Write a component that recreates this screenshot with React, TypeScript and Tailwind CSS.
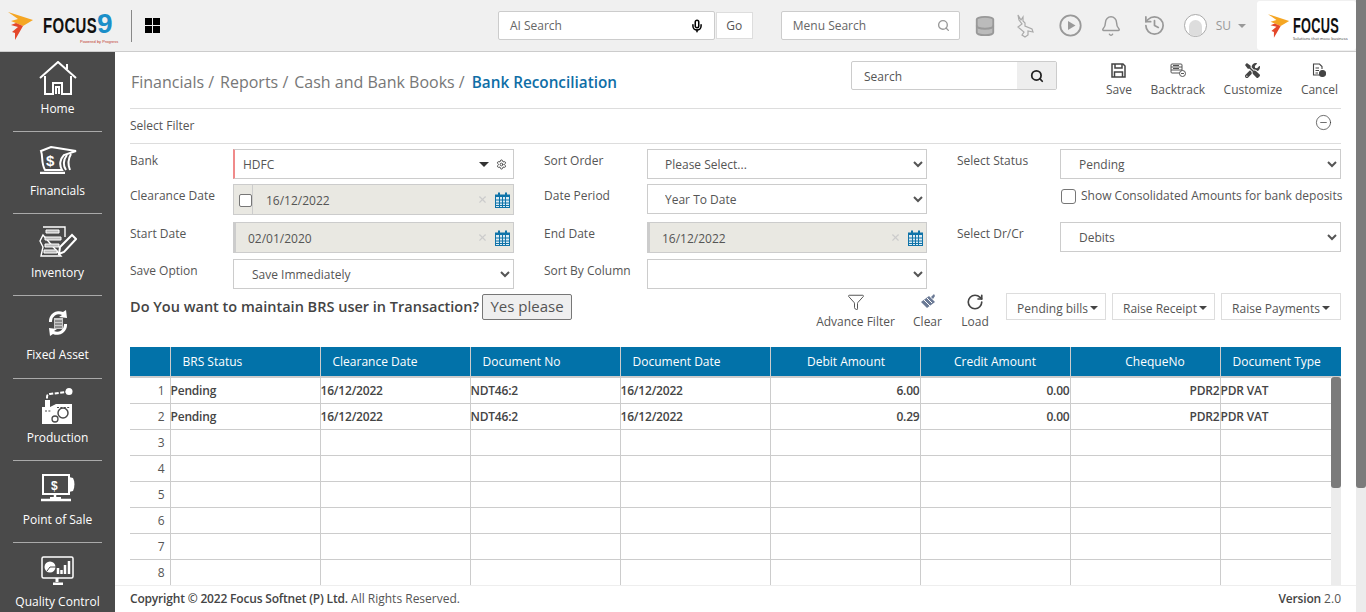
import React from "react";
import { Database, Bell, History, Search, Mic, Funnel, RotateCw, Settings, X, CircleMinus } from "lucide-react";
import { FaTools } from "react-icons/fa";

const font = { fontFamily: '"Open Sans", "Noto Sans", sans-serif' };

function Flame({ w = 26, h = 28 }: { w?: number; h?: number }) {
  return (
    <svg width={w} height={h} viewBox="0 0 26 28">
      <path d="M0 0 L25 8 L15 14 L3 9 L10 7 Z" fill="#f5a623" />
      <path d="M15 14 L7 28 L7 21 L4 20 L10 15 L3 13 L8 11 Z" fill="#e4472a" />
    </svg>
  );
}

function HomeIcon() {
  return (
    <svg width="38" height="35" viewBox="0 0 38 35" fill="none" stroke="#fff" strokeWidth="2">
      <path d="M1 17 L19 1 L37 17" />
      <path d="M28 8 V3" />
      <path d="M6 15 V33 H14 V22 H23 V33 H32 V15" />
      <path d="M17 33 V26 H20 V33" />
    </svg>
  );
}
function FinIcon() {
  return (
    <svg width="38" height="28" viewBox="0 0 38 28" fill="none" stroke="#fff" strokeWidth="2">
      <path d="M2 5 L12 1 L37 5 L25 9 C21 13 20 19 23 24 H6 C2 17 4 10 2 5 Z" />
      <path d="M28 9 C24 14 24 20 27 24 M32 8 C29 13 29 19 31 24" />
      <path d="M1 27 H26" strokeWidth="2.5" />
      <text x="7" y="20" fontSize="15" fontWeight="700" fill="#fff" stroke="none" fontFamily="Liberation Sans">$</text>
    </svg>
  );
}
function InvIcon() {
  return (
    <svg width="38" height="31" viewBox="0 0 38 31" fill="none" stroke="#fff" strokeWidth="1.4">
      <path d="M4 1 H26 V11 M22 30 H2 L4 21 L1 15 L4 9 Z" />
      <path d="M7 4 H20 V7 H7 Z M6 11 H22 V14 H6 Z M6 18 H20 V21 H6 Z M5 24 H18 V27 H5 Z" fill="#bbb" stroke="#fff" strokeWidth="1" />
      <path d="M20 28 L21 21 L33 9 L37 13 L25 26 Z" fill="#4a4a4a" strokeWidth="2" />
    </svg>
  );
}
function AssetIcon() {
  return (
    <svg width="24" height="28" viewBox="0 0 24 28" fill="none">
      <path d="M3 13 A10 10 0 0 1 17 3 L20 1 L21 9 L13 8 L16 6 A7 7 0 0 0 6 13 Z" fill="#fff" />
      <path d="M21 15 A10 10 0 0 1 7 25 L4 27 L3 19 L11 20 L8 22 A7 7 0 0 0 18 15 Z" fill="#fff" />
      <rect x="8" y="9" width="9" height="11" fill="#c9c9c9" />
      <path d="M9 12 H16 M9 15 H16 M9 18 H16" stroke="#555" />
    </svg>
  );
}
function ProdIcon() {
  return (
    <svg width="32" height="36" viewBox="0 0 32 36">
      <path d="M5 16 V9 Q5 6 8 6 L24 4" stroke="#fff" strokeWidth="2" strokeDasharray="4 1.5" fill="none" />
      <circle cx="27" cy="3.5" r="3.5" fill="#fff" />
      <path d="M3 12 H8 V19 L14 16 H30 V36 H0 V19 H3 Z" fill="#fff" />
      <circle cx="21" cy="25" r="5" fill="#fff" stroke="#4a4a4a" strokeWidth="1.5" />
      <circle cx="13" cy="31" r="3" fill="#fff" stroke="#4a4a4a" strokeWidth="1.3" />
      <path d="M3 23 H9 M15 19.5 H28" stroke="#4a4a4a" strokeWidth="1.2" strokeDasharray="2 1.4" />
    </svg>
  );
}
function PosIcon() {
  return (
    <svg width="36" height="28" viewBox="0 0 36 28" fill="none" stroke="#fff">
      <rect x="3" y="1" width="26" height="19" strokeWidth="2" />
      <path d="M29 3 L33 4 Q36 10 33 17 L29 18 Z" fill="#fff" stroke="none" />
      <path d="M15 20 V24 M1 26 H31" strokeWidth="2.5" />
      <path d="M10 24 H21" strokeWidth="2" />
      <text x="11" y="16" fontSize="12" fontWeight="700" fill="#fff" stroke="none" fontFamily="Liberation Sans">$</text>
    </svg>
  );
}
function QcIcon() {
  return (
    <svg width="33" height="29" viewBox="0 0 33 29" fill="none" stroke="#fff">
      <rect x="1" y="1" width="31" height="21" rx="1.5" strokeWidth="1.5" />
      <path d="M12 28 H22 M16 22 V26" strokeWidth="3" />
      <circle cx="9" cy="11" r="5.5" fill="#fff" stroke="none" />
      <path d="M9 11 L15 11 M9 11 L6 15" stroke="#4a4a4a" />
      <path d="M17 12 V18 M20.5 14 V18 M24 9 V18 M28 5 V18" strokeWidth="2.5" />
    </svg>
  );
}

const side: [string, React.ReactNode][] = [
  ["Home", <HomeIcon />],
  ["Financials", <FinIcon />],
  ["Inventory", <InvIcon />],
  ["Fixed Asset", <AssetIcon />],
  ["Production", <ProdIcon />],
  ["Point of Sale", <PosIcon />],
  ["Quality Control", <QcIcon />],
];

function CalIcon() {
  return (
    <svg width="15" height="16" viewBox="0 0 15 16">
      <path d="M0 2.5 H15 V16 H0 Z" fill="#0f73a8" />
      <rect x="3" y="0.5" width="2" height="3.5" fill="#0f73a8" />
      <rect x="10" y="0.5" width="2" height="3.5" fill="#0f73a8" />
      <path d="M1 5 H14 V15 H1 Z" fill="#dcebf3" />
      <path d="M1 8 H14 M1 11 H14 M1 13.5 H14 M4.5 5 V15 M7.5 5 V15 M10.5 5 V15" stroke="#0f73a8" strokeWidth="1" />
    </svg>
  );
}

const labelCls = "text-[12px] leading-[16px] text-[#555] pt-[4px]";

function Sel({ value, mid }: { value: string; mid?: boolean }) {
  return (
    <select
      defaultValue={value}
      style={font}
      className={`h-full w-full border border-[#ccc] bg-white pr-1 text-[12px] text-[#555] outline-none ${mid ? "pl-[13px]" : "pl-[14px]"}`}
    >
      <option value={value}>{value}</option>
    </select>
  );
}

function DateBox({ value, check, left }: { value: string; check?: boolean; left?: boolean }) {
  return (
    <div className={`flex h-full w-full items-center border border-[#ccc] bg-[#e9e8e2] text-[12px] text-[#555] ${left ? "border-l-[3px]" : ""}`}>
      {check && (
        <span className="flex h-full w-[19px] shrink-0 items-center border-r border-[#ccc] pl-[5px]">
          <span className="mt-[2px] h-[13px] w-[13px] shrink-0 rounded-[2px] border border-[#767676] bg-white" />
        </span>
      )}
      <span className={`flex-1 ${check ? "pl-[13px]" : "pl-[12px]"} pt-[3px]`}>{value}</span>
      <X size={11} className="mr-[7px] text-[#ccc]" strokeWidth={2.5} />
      <span className="mr-[3px]"><CalIcon /></span>
    </div>
  );
}

function Action({ icon, label }: { icon: React.ReactNode; label: string }) {
  return (
    <div className="flex flex-col items-center text-[12px] leading-[16px] text-[#555]">
      <div className="flex h-[18px] items-center justify-center">{icon}</div>
      <div className="mt-[3px] whitespace-nowrap">{label}</div>
    </div>
  );
}

function DropBtn({ label, w, pl }: { label: string; w: string; pl?: string }) {
  return (
    <div className={`flex h-[27px] items-center justify-center border border-[#ddd] bg-white pt-[4px] text-[12px] text-[#555] ${w} ${pl ?? ""}`}>
      {label}
      <span className="ml-[2px] -mt-[2px] h-0 w-0 border-x-[4px] border-t-[4px] border-x-transparent border-t-[#444]" />
    </div>
  );
}

const cols = ["BRS Status", "Clearance Date", "Document No", "Document Date", "Debit Amount", "Credit Amount", "ChequeNo", "Document Type"];
const rows = [
  ["Pending", "16/12/2022", "NDT46:2", "16/12/2022", "6.00", "0.00", "PDR2", "PDR VAT"],
  ["Pending", "16/12/2022", "NDT46:2", "16/12/2022", "0.29", "0.00", "PDR2", "PDR VAT"],
  ...Array.from({ length: 6 }, () => ["", "", "", "", "", "", "", ""]),
];
const thAlign = ["pl-[12px] text-left", "pl-[12px] text-left", "pl-[12px] text-left", "pl-[12px] text-left", "pl-[2px] text-center", "text-center", "pl-[20px] text-center", "pl-[12px] text-left"];

export default function App() {
  return (
    <div style={font} className="flex h-[612px] w-[1366px] overflow-hidden bg-white">
      <div className="flex h-full w-[1356px] flex-col">
        {/* top bar */}
        <header className="flex h-[52px] shrink-0 items-center border-b border-[#ccc] bg-[#f0f0f0]">
          <div className="ml-[8px] flex w-[123px] items-center">
            <Flame />
            <span className="relative ml-[9px] flex items-center leading-none text-[#111]" style={{ fontFamily: '"Liberation Sans", sans-serif' }}>
              <span className="inline-block w-[54px] origin-left scale-x-[0.68] whitespace-nowrap text-[22px] font-bold tracking-[0.5px]">FOCUS</span>
              <span className="-mt-[3px] text-[28px] font-bold text-[#1b8fc9]">9</span>
              <span className="absolute left-[37px] top-[27px] whitespace-nowrap text-[4px] leading-none text-[#c0392b]">Powered by Progress</span>
            </span>
          </div>
          <div className="h-[32px] w-px bg-[#888]" />
          <div className="ml-[13px] grid grid-cols-2 gap-[1px]">
            <span className="h-[7px] w-[7px] bg-black" />
            <span className="h-[7px] w-[7px] bg-black" />
            <span className="h-[7px] w-[7px] bg-black" />
            <span className="h-[7px] w-[7px] bg-black" />
          </div>
          <div className="ml-[338px] flex h-[29px] w-[217px] items-center rounded-[2px] border border-[#ccc] bg-white pl-[11px] pr-[10px] text-[12px] text-[#666]">
            <span className="flex-1">AI Search</span>
            <Mic size={14} strokeWidth={2.6} className="text-black" />
          </div>
          <div className="ml-px flex h-[27px] w-[37px] items-center justify-center border border-[#ddd] bg-white text-[12px] text-[#555]">Go</div>
          <div className="ml-[28px] flex h-[29px] w-[179px] items-center rounded-[2px] border border-[#ccc] bg-white pl-[11px] pr-[9px] text-[12px] text-[#666]">
            <span className="flex-1">Menu Search</span>
            <Search size={13} strokeWidth={2.5} className="text-[#999]" />
          </div>
          <div className="ml-[14px] flex items-center text-[#999]">
            <Database size={22} strokeWidth={2} className="fill-[#bbb]" />
            <svg className="ml-[20px]" width="18" height="24" viewBox="0 0 18 24" fill="none" stroke="#aaa" strokeWidth="1.2">
              <path d="M2 1 L5 6 L7 3 L7 7 L9 9 L9 12 L16 15 L17 18 L12 17 L12 21 L9 23 L6 21 L8 18 L2 13 L6 10 L3 6 Z" />
            </svg>
            <svg className="ml-[25px]" width="23" height="23" viewBox="0 0 23 23">
              <circle cx="11.5" cy="11.5" r="10.2" fill="none" stroke="#999" strokeWidth="1.8" />
              <path d="M9 7 L16.5 11.5 L9 16 Z" fill="#999" />
            </svg>
            <Bell size={22} strokeWidth={1.6} className="ml-[18px]" />
            <History size={23} strokeWidth={1.8} className="ml-[21px]" />
            <span className="ml-[18px] flex h-[23px] w-[23px] items-end justify-center overflow-hidden rounded-full border border-[#aaa] bg-white">
              <span className="h-[16px] w-[13px] rounded-t-full bg-[#ddd]" />
            </span>
            <span className="ml-[9px] text-[12px] text-[#999]">SU</span>
            <span className="ml-[7px] h-0 w-0 border-x-[4px] border-t-[4px] border-x-transparent border-t-[#999]" />
            <div className="ml-[11px] flex h-[49px] w-[99px] items-center justify-start rounded-[3px] bg-white pl-[11px]">
              <div className="relative flex items-center">
                <Flame w={22} h={24} />
                <span className="ml-[3px] inline-block h-[18px] w-[46px] origin-left scale-x-[0.58] whitespace-nowrap text-[22px] font-bold leading-[18px] tracking-[0.5px] text-[#111]" style={{ fontFamily: '"Liberation Sans", sans-serif' }}>FOCUS</span>
                <span className="absolute left-[25px] top-[23px] whitespace-nowrap text-[4px] leading-none text-[#333]">Solutions that move business</span>
              </div>
            </div>
          </div>
        </header>

        <div className="flex min-h-0 flex-1">
          {/* sidebar */}
          <aside className="flex w-[115px] shrink-0 flex-col overflow-hidden bg-[#4a4a4a] text-white">
            {side.map(([label, icon], i) => (
              <div key={label} className={`mx-[13px] flex shrink-0 flex-col items-center border-b border-[#aaa] ${i === 0 ? "h-[80px]" : "h-[82.2px]"}`}>
                <div className="flex flex-1 items-center justify-center pt-[4px]">{icon}</div>
                <div className={`whitespace-nowrap text-[12px] leading-[16px] ${i === 3 ? "pb-[15px]" : "pb-[14px]"}`}>{label}</div>
              </div>
            ))}
          </aside>

          {/* main */}
          <main className="flex min-w-0 flex-1 flex-col">
            <div className="flex min-h-0 flex-1 flex-col px-[15px]">
              <div className="flex h-[57px] shrink-0 items-start border-b border-[#ddd]">
                <div className="flex h-full flex-1 items-center pl-[1px] pt-[4px] text-[16px] text-[#777]">
                  <span>Financials /</span>
                  <span className="ml-[6px]">Reports /</span>
                  <span className="ml-[6px]">Cash and Bank Books /</span>
                  <span className="ml-[7px] pt-[1px] text-[15.3px] font-semibold text-[#0f6ea6]">Bank Reconciliation</span>
                </div>
                <div className="mt-[9px] flex h-[29px] w-[206px] items-center overflow-hidden rounded-[2px] border border-[#ccc]">
                  <span className="flex-1 pl-[12px] pt-[3px] text-[12px] text-[#555]">Search</span>
                  <span className="flex h-full w-[39px] items-center justify-center bg-[#eee]">
                    <Search size={14} strokeWidth={3} className="text-[#222]" />
                  </span>
                </div>
                <div className="ml-[49px] mr-[1px] mt-[9px] flex w-[234px] justify-between pr-[2px]">
                  <Action label="Save" icon={
                    <svg width="15" height="15" viewBox="0 0 15 15" fill="none" stroke="#444" strokeWidth="1.5">
                      <path d="M1 1 H12 L14 3 V14 H1 Z" />
                      <path d="M4 1 V5 H11 V1 M3.5 14 V9 H11.5 V14" />
                    </svg>
                  } />
                  <Action label="Backtrack" icon={
                    <svg width="16" height="14" viewBox="0 0 16 14" fill="none" stroke="#555" strokeWidth="1">
                      <rect x="1" y="1" width="11" height="9" rx="1" />
                      <path d="M1 4 H12 M1 7 H12 M3 2.5 H9 M3 5.5 H9" />
                      <circle cx="12.5" cy="10.5" r="3" fill="#fff" />
                      <path d="M11 10.5 H14" />
                    </svg>
                  } />
                  <Action label="Customize" icon={<FaTools size={15} className="text-[#444]" />} />
                  <Action label="Cancel" icon={
                    <svg width="14" height="15" viewBox="0 0 14 15" fill="none" stroke="#444" strokeWidth="1.1">
                      <path d="M9 12 H1.5 V1 H7.5 L10 3.5 V6" />
                      <path d="M3.5 5 H7 M3.5 7.5 H7 M3.5 10 H6" />
                      <circle cx="10.5" cy="10.5" r="3" fill="#444" />
                    </svg>
                  } />
                </div>
              </div>

              <div className="flex h-[35px] shrink-0 items-center justify-between border-b border-[#ddd] pr-[9px] text-[12px] text-[#555]">
                <span className="-mt-px">Select Filter</span>
                <CircleMinus size={17} strokeWidth={1} className="-mt-[8px] text-[#333]" />
              </div>

              {/* filters */}
              <div className="mt-[5px] grid shrink-0 grid-cols-[103px_281px_30px_103px_280px_30px_103px_281px] grid-rows-[30px_31px_31px_30px] gap-y-[6px]">
                <div className={labelCls}>Bank</div>
                <div className="flex h-full items-center border border-l-2 border-[#ccc] border-l-[#f08a8a] pl-[8px] pr-[6px] pt-[1px] text-[12px] text-[#555]">
                  <span className="flex-1">HDFC</span>
                  <span className="h-0 w-0 border-x-[5px] border-t-[5px] border-x-transparent border-t-[#333]" />
                  <Settings size={11} className="ml-[7px] text-[#444]" />
                </div>
                <div />
                <div className={labelCls}>Sort Order</div>
                <div><Sel value="Please Select..." mid /></div>
                <div />
                <div className={labelCls}>Select Status</div>
                <div><Sel value="Pending" /></div>

                <div className={`${labelCls} -mt-px`}>Clearance Date</div>
                <div className="-mt-px h-[31px]"><DateBox value="16/12/2022" check /></div>
                <div />
                <div className={`${labelCls} -mt-px`}>Date Period</div>
                <div className="-mt-px h-[30px]"><Sel value="Year To Date" mid /></div>
                <div />
                <div />
                <div className="flex items-start text-[12px] leading-[16px] text-[#555]">
                  <span className="ml-px mt-[4px] h-[15px] w-[15px] shrink-0 rounded-[3px] border border-[#767676] bg-white" />
                  <span className="ml-[5px] mt-[3px] whitespace-nowrap">Show Consolidated Amounts for bank deposits</span>
                </div>

                <div className={labelCls}>Start Date</div>
                <div><DateBox value="02/01/2020" left /></div>
                <div />
                <div className={labelCls}>End Date</div>
                <div><DateBox value="16/12/2022" left /></div>
                <div />
                <div className={labelCls}>Select Dr/Cr</div>
                <div className="h-[30px]"><Sel value="Debits" /></div>

                <div className={labelCls}>Save Option</div>
                <div><Sel value="Save Immediately" /></div>
                <div />
                <div className={labelCls}>Sort By Column</div>
                <div><Sel value="" /></div>
                <div />
                <div />
                <div />
              </div>

              {/* toolbar */}
              <div className="mt-[4px] flex h-[54px] shrink-0 items-start">
                <span className="mt-[2px] whitespace-nowrap text-[14.5px] font-semibold leading-[24px] text-[#444]">Do You want to maintain BRS user in Transaction?</span>
                <span className="ml-[3px] mt-px flex h-[26px] w-[90px] items-center justify-center rounded-[2px] border border-[#777] bg-[#efefef] pb-[2px] text-[15px] text-[#555]">Yes please</span>
                <div className="ml-auto flex items-start">
                  <div className="flex w-[79px] flex-col items-center text-[12px] leading-[16px] text-[#555]">
                    <Funnel size={18} strokeWidth={1.2} className="text-[#444]" />
                    <span className="mt-[3px] whitespace-nowrap">Advance Filter</span>
                  </div>
                  <div className="ml-[18px] flex w-[29px] flex-col items-center text-[12px] leading-[16px] text-[#555]">
                    <svg width="16" height="18" viewBox="0 0 16 18" fill="none">
                      <path d="M1 9 L9 3 L15 9 L7 15 Z" fill="#6b7a95" />
                      <path d="M4 7 L10 13 M7 5 L12 10" stroke="#fff" />
                      <path d="M11 4 L14 1 L15 3 L13 6 Z" fill="#6b7a95" />
                    </svg>
                    <span className="mt-[3px]">Clear</span>
                  </div>
                  <div className="ml-[19px] flex w-[28px] flex-col items-center text-[12px] leading-[16px] text-[#555]">
                    <RotateCw size={18} strokeWidth={2.2} className="text-[#444]" />
                    <span className="mt-[3px]">Load</span>
                  </div>
                  <div className="ml-[17px] flex gap-[6px]">
                    <DropBtn label="Pending bills" w="w-[100px]" pl="pl-[3px]" />
                    <DropBtn label="Raise Receipt" w="w-[103px]" pl="pl-[3px]" />
                    <DropBtn label="Raise Payments" w="w-[120px]" />
                  </div>
                </div>
              </div>

              {/* table */}
              <div className="relative min-h-0 flex-1 overflow-hidden">
                <table className="w-[1211px] table-fixed border-collapse text-[12px] text-[#444]">
                  <colgroup>
                    <col className="w-[40px]" />
                    {cols.map((c, i) => <col key={c} className={i === 7 ? "w-[121px]" : "w-[150px]"} />)}
                  </colgroup>
                  <thead>
                    <tr className="h-[30px] bg-[#0272a9] text-white">
                      <th className="border-r border-[#ccc]" />
                      {cols.map((c, i) => (
                        <th key={c} className={`border-[#ccc] font-normal ${i < 7 ? "border-r" : ""} ${thAlign[i]}`}>{c}</th>
                      ))}
                    </tr>
                  </thead>
                  <tbody>
                    {rows.map((r, i) => (
                      <tr key={i} className={`h-[26px] border-b border-[#ccc] ${i === 0 ? "border-t-2" : ""}`}>
                        <td className="border-r border-[#ccc] pr-[5px] pt-[2px] text-right text-[#555]">{i + 1}</td>
                        {r.map((v, j) => (
                          <td key={j} className={`border-r border-[#ccc] pt-[2px] font-semibold tracking-[-0.2px] ${j >= 4 && j <= 6 ? "text-right" : ""} ${j === 7 ? "border-r-0" : ""}`}>{v}</td>
                        ))}
                      </tr>
                    ))}
                  </tbody>
                </table>
                <div className="absolute right-0 top-[30px] bottom-0 w-[10px] bg-[#ececec]">
                  <div className="h-[111px] rounded-[3px] bg-[#7b7b7b]" />
                </div>
              </div>
            </div>

            <footer className="flex h-[27px] shrink-0 items-center justify-between border-t border-[#eee] bg-white px-[15px] text-[12px] text-[#555]">
              <span><span className="font-semibold tracking-[-0.18px] text-[#444]">Copyright © 2022 Focus Softnet (P) Ltd.</span> All Rights Reserved.</span>
              <span><span className="font-semibold tracking-[-0.18px] text-[#444]">Version</span> 2.0</span>
            </footer>
          </main>
        </div>
      </div>
      {/* page scrollbar */}
      <div className="h-full w-[10px] bg-[#ececec]">
        <div className="h-[488px] rounded-b-[3px] bg-[#7b7b7b]" />
      </div>
    </div>
  );
}
